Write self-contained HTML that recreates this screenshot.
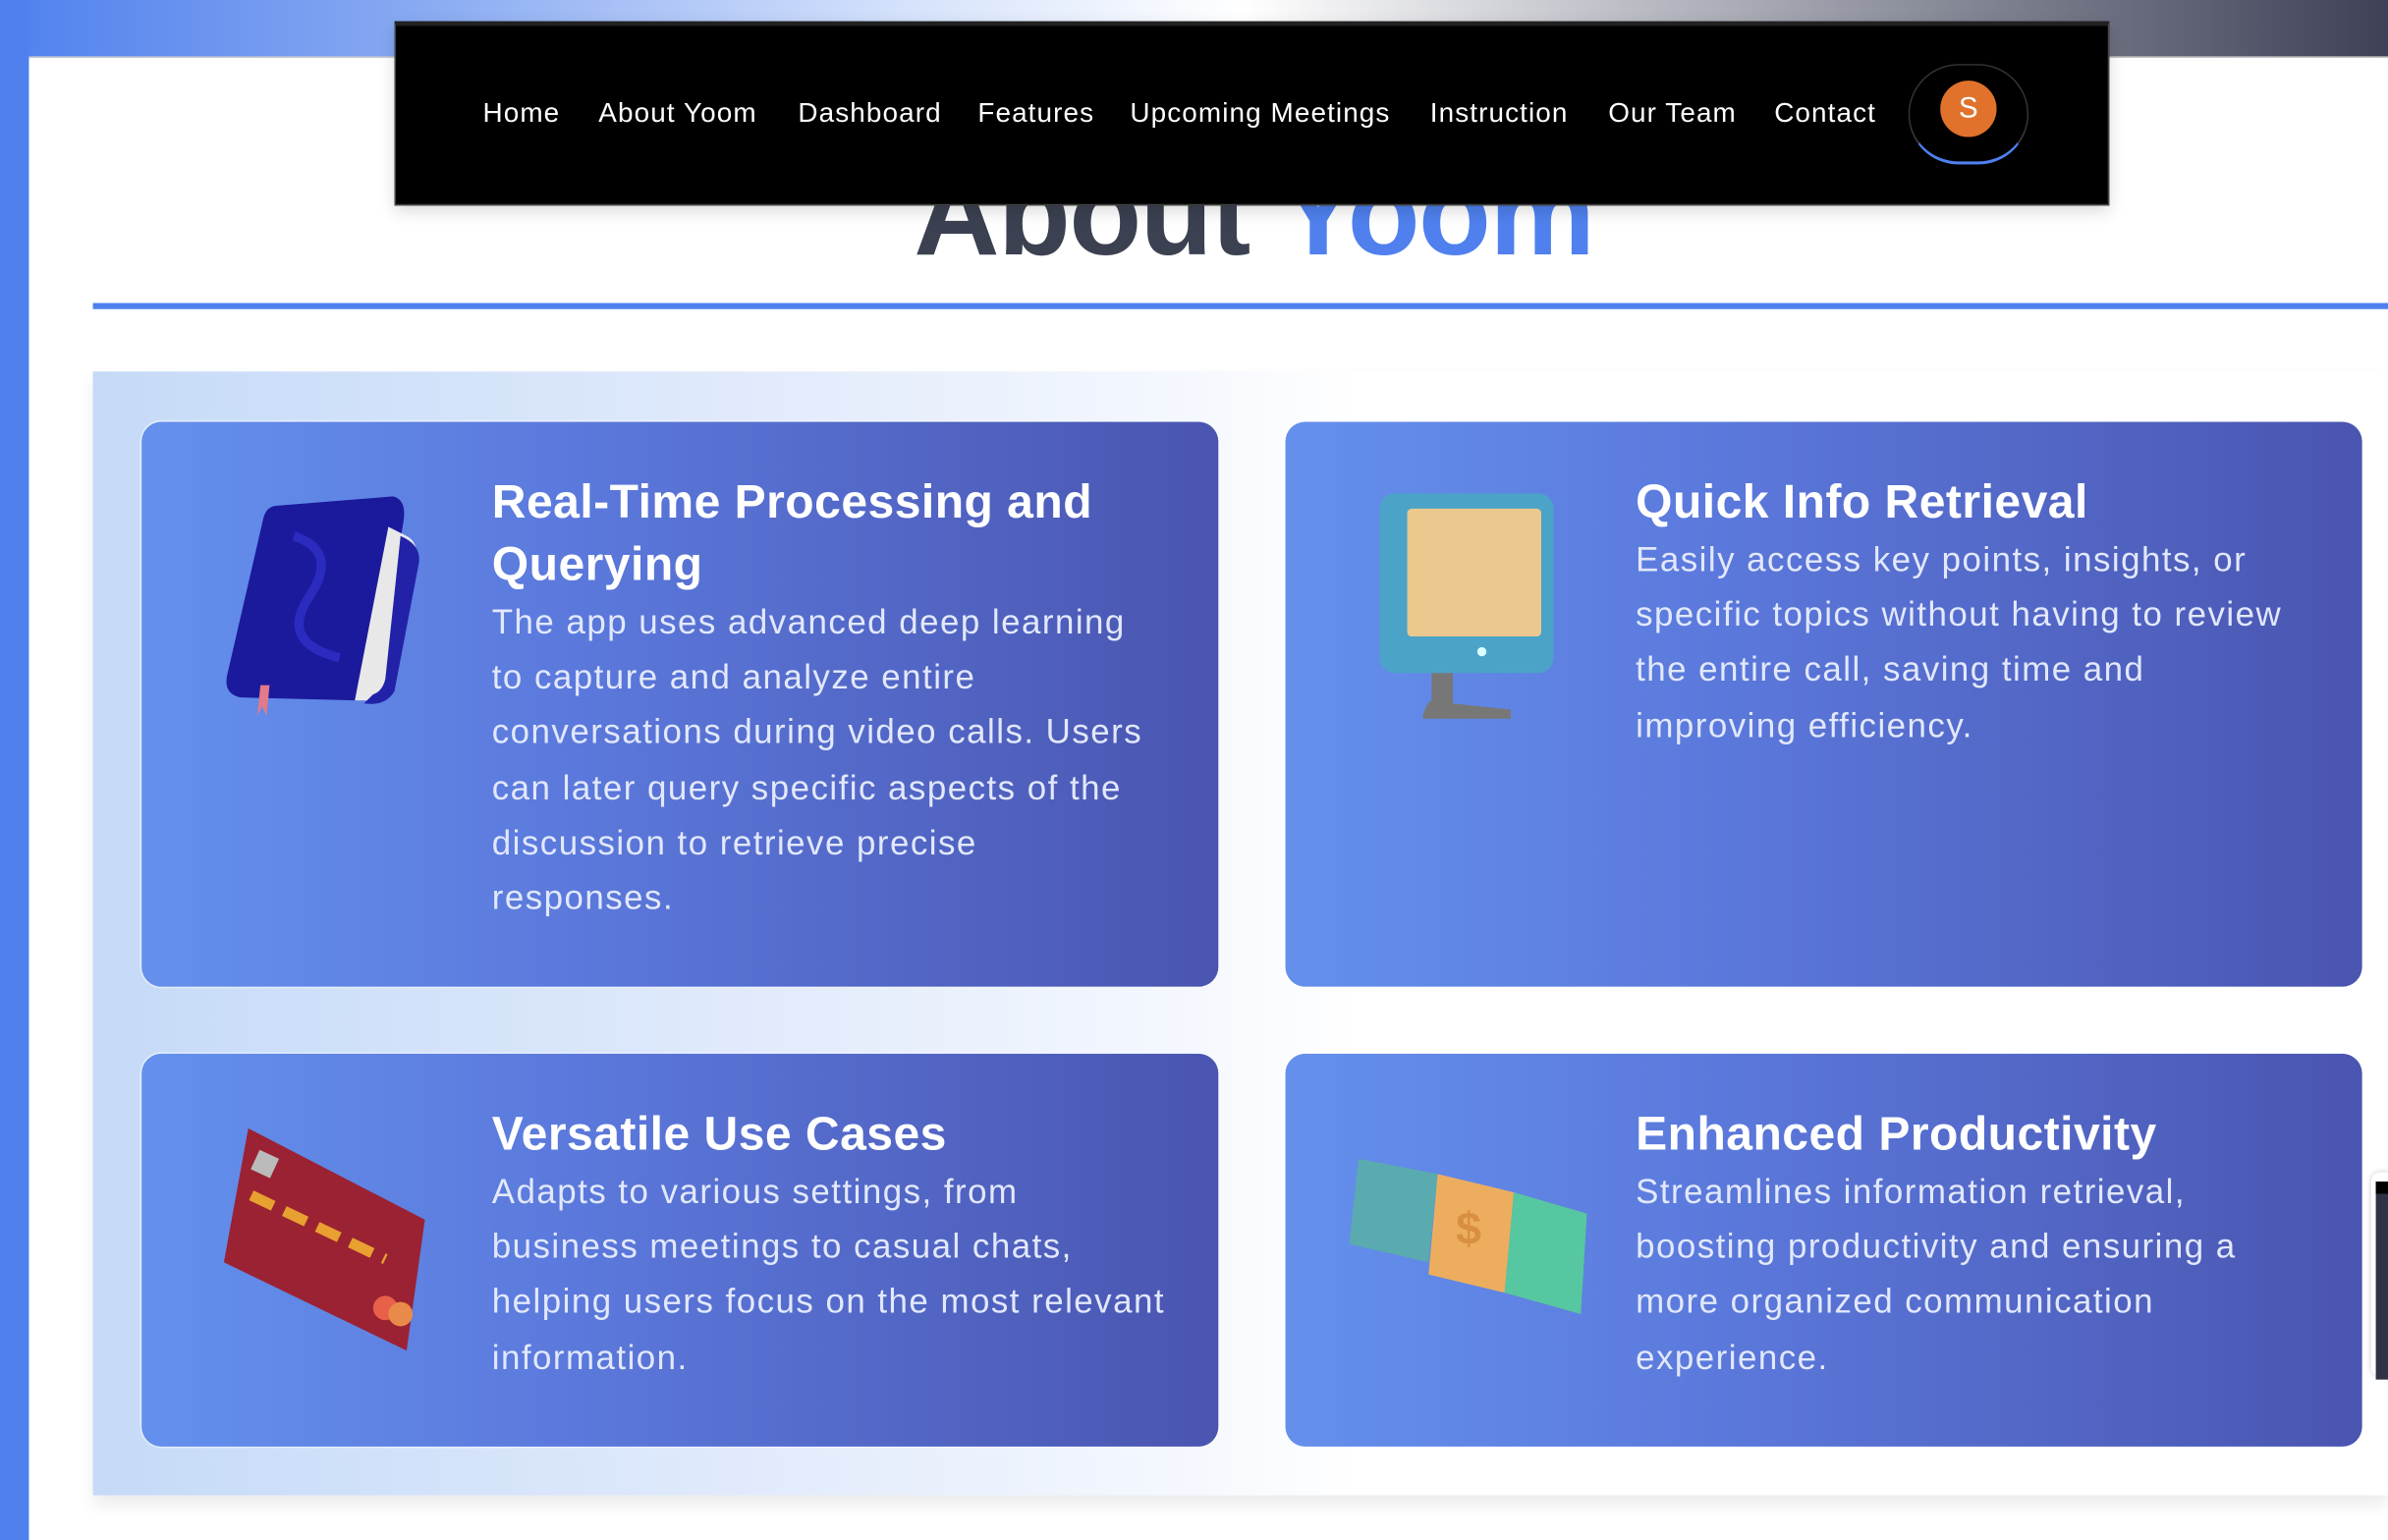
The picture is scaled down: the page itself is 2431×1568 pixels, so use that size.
<!DOCTYPE html>
<html><head><meta charset="utf-8"><style>
html,body{margin:0;padding:0;width:2431px;height:1568px;overflow:hidden;background:#fff;}
#w{position:absolute;left:0;top:0;width:1568px;height:1011.5px;transform:scale(1.55038);transform-origin:0 0;font-family:"Liberation Sans",sans-serif;overflow:hidden;background:#fff;}
.abs{position:absolute;}
.nav a{position:absolute;top:47px;color:#fff;font-size:18px;white-space:nowrap;letter-spacing:0.7px}
.card{position:absolute;border-radius:13px;background:linear-gradient(90deg,#6490ec 0%,#5b79dc 40%,#4a55b0 100%);box-shadow:0 0 0 1px rgba(255,255,255,.5);}
.card h3{position:absolute;left:230px;margin:0;color:#fff;font-size:31px;font-weight:bold;line-height:41px;width:470px;letter-spacing:0.3px}
.card p{position:absolute;left:230px;margin:0;color:#e2e8fb;font-size:22.5px;line-height:36.2px;width:436px;letter-spacing:0.95px}
</style></head><body><div id="w">
<div class="abs" style="left:0;top:0;width:1568px;height:38px;background:linear-gradient(90deg,#4f80ee 0%,#8aabf2 18%,#d5e2fb 38%,#fff 52%,#b4b6bf 70%,#3e4157 100%)"></div>
<div class="abs" style="left:0;top:0;width:19px;height:1012px;background:#4f80ee"></div>
<div class="abs" style="left:19px;top:37px;width:1549px;height:1px;background:#ccc"></div>
<div class="abs" style="left:600px;top:90px;font-size:78px;font-weight:bold;color:#3b4151;line-height:100px;white-space:nowrap;letter-spacing:-1px">About <span style="color:#4f80ee">Yoom</span></div>
<div class="abs nav" style="left:259px;top:14px;width:1124px;height:117px;background:#000;border:1px solid #444;border-top:3px solid #222;box-shadow:0 4px 10px rgba(0,0,0,.15)">
<a style="left:57px">Home</a><a style="left:133px">About Yoom</a><a style="left:264px">Dashboard</a><a style="left:382px">Features</a><a style="left:482px">Upcoming Meetings</a><a style="left:679px">Instruction</a><a style="left:796px">Our Team</a><a style="left:905px">Contact</a>
<div class="abs" style="left:993px;top:25px;width:77px;height:63px;border:1px solid #333;border-radius:40px;border-bottom:2px solid #4f80ee"></div>
<div class="abs" style="left:1014px;top:36px;width:37px;height:37px;border-radius:50%;background:#e0722c;color:#fff;font-size:19px;text-align:center;line-height:37px">S</div>
</div>
<div class="abs" style="left:61px;top:199px;width:1507px;height:4px;background:#4f80ee"></div>
<div class="abs" style="left:61px;top:244px;width:1507px;height:738px;background:linear-gradient(90deg,#c5daf8 0%,#dde8fb 25%,#f5f8fe 48%,#fff 55%);box-shadow:0 6px 10px rgba(0,0,0,.08)"></div>

<div class="card" style="left:93px;top:277px;width:707px;height:371px">
<svg class="abs" style="left:50px;top:45px" width="140" height="150" viewBox="0 0 140 150"><path d="M40 10 L115 4 Q124 6 122 20 L104 130 Q100 138 90 138 L15 136 Q4 134 6 122 L30 18 Q32 10 40 10Z" fill="#1c1a9c"/><path d="M112 24 L124 30 Q132 34 130 46 L114 130 Q110 140 98 138 L90 138 Z" fill="#e8e8e8"/><path d="M120 30 Q134 36 132 48 L116 132 Q110 142 96 140 L102 134 Q108 132 110 124 Z" fill="#2222a8"/><path d="M50 30 Q80 40 60 70 Q40 100 80 110" stroke="#2b2bc0" stroke-width="6" fill="none"/><path d="M28 128 L34 128 L32 148 L29 142 L26 148Z" fill="#e27a8a"/></svg>
<h3 style="top:32px">Real-Time Processing and Querying</h3>
<p style="top:114px">The app uses advanced deep learning to capture and analyze entire conversations during video calls. Users can later query specific aspects of the discussion to retrieve precise responses.</p>
</div>
<div class="card" style="left:844px;top:277px;width:707px;height:371px">
<svg class="abs" style="left:60px;top:45px" width="120" height="155" viewBox="0 0 120 155"><rect x="2" y="2" width="114" height="118" rx="10" fill="#4ba4c8"/><rect x="20" y="12" width="88" height="84" rx="3" fill="#ebc88e"/><circle cx="69" cy="106" r="3" fill="#dff"/><path d="M36 120 L50 120 L50 140 L88 144 L88 150 L30 150 Q32 140 36 138Z" fill="#777"/></svg>
<h3 style="top:32px">Quick Info Retrieval</h3>
<p style="top:73px">Easily access key points, insights, or specific topics without having to review the entire call, saving time and improving efficiency.</p>
</div>
<div class="card" style="left:93px;top:692px;width:707px;height:258px">
<svg class="abs" style="left:50px;top:45px" width="140" height="155" viewBox="0 0 140 155"><path d="M20 4 L136 64 L124 150 L4 92 Z" fill="#9b2232"/><rect x="24" y="20" width="14" height="14" fill="#bbb" transform="rotate(25 30 27)"/><path d="M22 48 L110 90" stroke="#e8a030" stroke-width="7" stroke-dasharray="16 8"/><circle cx="110" cy="122" r="8" fill="#e8604a"/><circle cx="120" cy="126" r="8" fill="#e88a4a"/></svg>
<h3 style="top:32px">Versatile Use Cases</h3>
<p style="top:73px;width:470px;white-space:nowrap">Adapts to various settings, from<br>business meetings to casual chats,<br>helping users focus on the most relevant<br>information.</p>
</div>
<div class="card" style="left:844px;top:692px;width:707px;height:258px">
<svg class="abs" style="left:40px;top:65px" width="165" height="110" viewBox="0 0 165 110"><path d="M8 4 L60 14 L54 72 L2 60Z" fill="#5aabb0"/><path d="M60 14 L110 26 L104 92 L54 80 Z" fill="#ecae5e"/><path d="M110 26 L158 40 L154 106 L104 92 Z" fill="#56c7a0"/><text x="72" y="60" font-size="30" font-weight="bold" fill="#d89040" font-family="Liberation Sans,sans-serif">$</text></svg>
<h3 style="top:32px">Enhanced Productivity</h3>
<p style="top:73px">Streamlines information retrieval, boosting productivity and ensuring a more organized communication experience.</p>
</div>
<div class="abs" style="left:1557px;top:770px;width:20px;height:134px;background:#fff;border-radius:6px;box-shadow:0 0 4px rgba(0,0,0,.2)"><div class="abs" style="left:3px;top:6px;width:20px;height:122px;background:#2f3245;border-top:8px solid #000"></div></div>
</div></body></html>
